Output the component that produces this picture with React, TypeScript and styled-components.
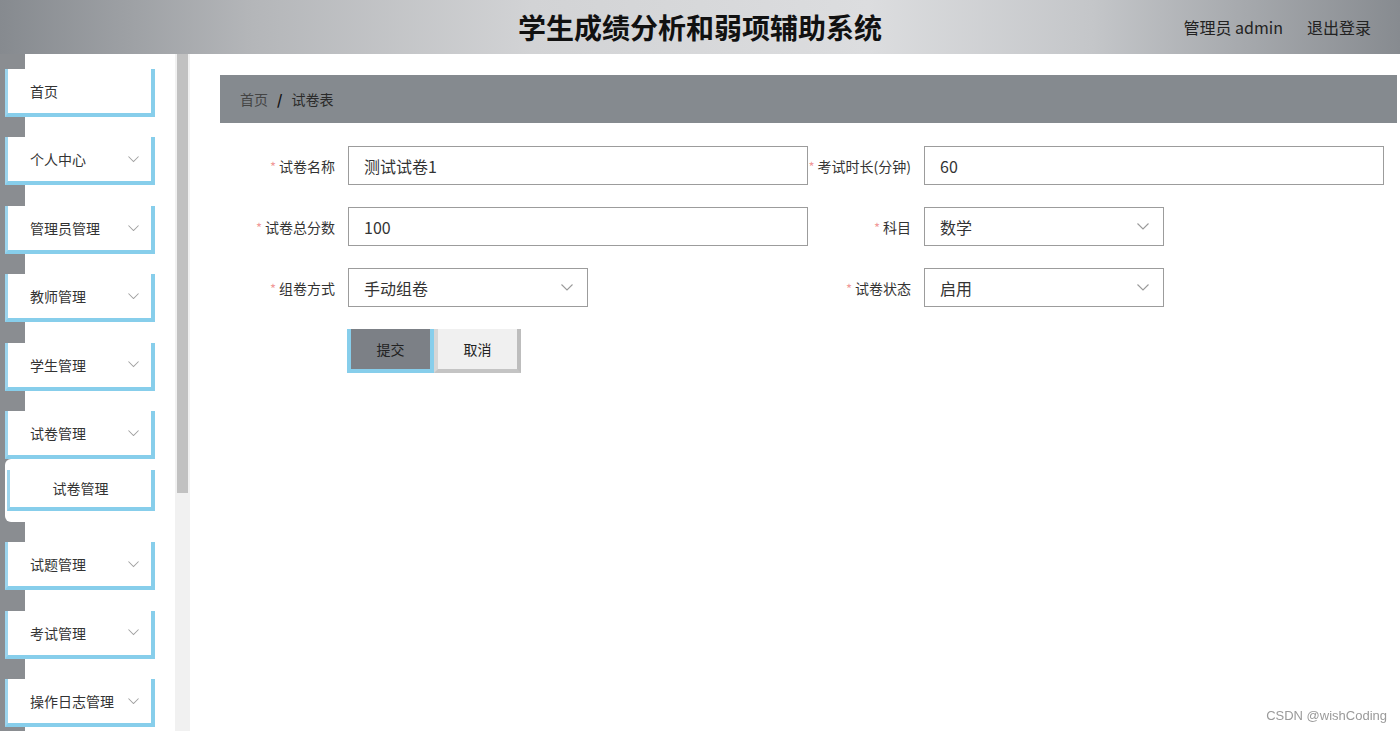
import React from "react";
import styled, { createGlobalStyle } from "styled-components";

const GlobalStyle = createGlobalStyle`
  html, body { margin: 0; padding: 0; height: 100%; overflow: hidden; }
  body { font-family: "Noto Sans CJK SC", "Noto Sans", sans-serif; color: #333; background: #fff; }
  * { box-sizing: border-box; }
`;

const Page = styled.div`
  display: flex;
  flex-direction: column;
  height: 100vh;
`;

const Header = styled.header`
  height: 54px;
  flex: none;
  display: grid;
  grid-template-columns: 1fr auto 1fr;
  align-items: center;
  background: linear-gradient(90deg, #868a8f 0%, #b4b6b9 18%, #d2d3d5 38%, #dcdddf 62%, #c4c6c9 78%, #878b90 100%);
`;

const Title = styled.h1`
  grid-column: 2;
  margin: 0;
  font-size: 28px;
  font-weight: 700;
  color: #111;
`;

const UserBar = styled.div`
  grid-column: 3;
  justify-self: end;
  display: flex;
  gap: 24px;
  padding-right: 29px;
  font-size: 16px;
  color: #222;
`;

const Body = styled.div`
  flex: 1;
  min-height: 0;
  display: flex;
`;

const Sidebar = styled.aside`
  width: 190px;
  flex: none;
  display: flex;
  min-height: 0;
`;

const SideScroll = styled.div`
  width: 175px;
  overflow: hidden;
  background: linear-gradient(90deg, #8a8d91 0, #8a8d91 25px, #fff 25px);
`;

const ScrollTrack = styled.div`
  width: 15px;
  background: #f1f1f1;
  padding: 0 2px;
`;

const ScrollThumb = styled.div`
  height: 439px;
  background: #c1c1c1;
`;

const Menu = styled.nav`
  display: flex;
  flex-direction: column;
  padding-top: 15px;
`;

const MenuItem = styled.div<{ $first?: boolean }>`
  margin: ${(p) => (p.$first ? "0" : "20.4px")} 0 0 5px;
  width: 150px;
  height: 48px;
  flex: none;
  display: flex;
  align-items: center;
  justify-content: space-between;
  padding: 0 12px 0 22px;
  background: #fff;
  border-left: 3px solid #9dd5ee;
  border-right: 4px solid #87ceeb;
  border-bottom: 4px solid #87ceeb;
  font-size: 14px;
  color: #333;
`;

const SubMenu = styled.div`
  margin-left: 5px;
  padding: 11px 0 11px 2px;
  background: #fff;
  border-radius: 6px 0 0 6px;
`;

const SubItem = styled.div`
  width: 148px;
  height: 41px;
  display: flex;
  align-items: center;
  justify-content: center;
  background: #fff;
  border-left: 3px solid #9dd5ee;
  border-right: 4px solid #87ceeb;
  border-bottom: 4px solid #87ceeb;
  font-size: 14px;
  color: #333;
`;

const Main = styled.main`
  flex: 1;
  min-width: 0;
  padding: 21px 3px 0 30px;
`;

const Breadcrumb = styled.div`
  height: 48px;
  display: flex;
  align-items: center;
  gap: 9px;
  padding-left: 20px;
  background: #858a8f;
  font-size: 14px;
  color: #2e2e2e;
`;

const Crumb = styled.span<{ $muted?: boolean }>`
  color: ${(p) => (p.$muted ? "#444" : "#2a2a2a")};
`;

const Sep = styled.span`
  font-weight: 700;
  color: #111;
`;

const Form = styled.form`
  margin-top: 23px;
  display: grid;
  grid-template-columns: 128px 460px 116px 460px;
  grid-auto-rows: 39px;
  row-gap: 22px;
  align-items: center;
`;

const Label = styled.label`
  justify-self: end;
  padding-right: 13px;
  font-size: 14px;
  color: #333;
  white-space: nowrap;
`;

const Star = styled.span`
  color: #f19a9a;
  margin-right: 3px;
  font-size: 13px;
`;

const Field = styled.div<{ $narrow?: boolean }>`
  width: ${(p) => (p.$narrow ? "240px" : "460px")};
  height: 39px;
  display: flex;
  align-items: center;
  justify-content: space-between;
  padding: 0 14px 0 15px;
  border: 1px solid #9c9c9c;
  background: #fff;
  font-size: 16px;
  color: #333;
`;

const Empty = styled.div``;

const Actions = styled.div`
  grid-column: 2;
  display: flex;
  height: 44px;
  margin-left: -1px;
  align-self: start;
`;

const Btn = styled.button<{ $primary?: boolean }>`
  width: 87px;
  height: 44px;
  padding: 0;
  font-family: inherit;
  font-size: 14px;
  color: #222;
  border: 0;
  border-left: 4px solid ${(p) => (p.$primary ? "#87ceeb" : "#d6d6d6")};
  border-right: 4px solid ${(p) => (p.$primary ? "#87ceeb" : "#bdbdbd")};
  border-bottom: 4px solid ${(p) => (p.$primary ? "#87ceeb" : "#c4c4c4")};
  background: ${(p) => (p.$primary ? "#7c8086" : "#f0f0f0")};
`;

const Watermark = styled.div`
  position: fixed;
  right: 13px;
  bottom: 8px;
  font-family: "Liberation Sans", Arial, sans-serif;
  font-size: 13px;
  color: #9a9a9a;
`;

const Chevron = ({ color = "#9a9a9a", size = 12 }: { color?: string; size?: number }) => (
  <svg width={size} height={size / 2 + 1} viewBox="0 0 12 7" fill="none">
    <path d="M0.5 0.5 L6 6 L11.5 0.5" stroke={color} strokeWidth="1.1" />
  </svg>
);

const before = ["个人中心", "管理员管理", "教师管理", "学生管理", "试卷管理"];
const after = ["试题管理", "考试管理", "操作日志管理"];

export default function App() {
  return (
    <Page>
      <GlobalStyle />
      <Header>
        <Title>学生成绩分析和弱项辅助系统</Title>
        <UserBar>
          <span>管理员 admin</span>
          <span>退出登录</span>
        </UserBar>
      </Header>
      <Body>
        <Sidebar>
          <SideScroll>
            <Menu>
              <MenuItem $first>首页</MenuItem>
              {before.map((t) => (
                <MenuItem key={t}>
                  {t}
                  <Chevron color="#a0a0a0" size={11} />
                </MenuItem>
              ))}
              <SubMenu>
                <SubItem>试卷管理</SubItem>
              </SubMenu>
              {after.map((t) => (
                <MenuItem key={t}>
                  {t}
                  <Chevron color="#a0a0a0" size={11} />
                </MenuItem>
              ))}
            </Menu>
          </SideScroll>
          <ScrollTrack>
            <ScrollThumb />
          </ScrollTrack>
        </Sidebar>
        <Main>
          <Breadcrumb>
            <Crumb $muted>首页</Crumb>
            <Sep>/</Sep>
            <Crumb>试卷表</Crumb>
          </Breadcrumb>
          <Form onSubmit={(e) => e.preventDefault()}>
            <Label><Star>*</Star>试卷名称</Label>
            <Field>测试试卷1</Field>
            <Label><Star>*</Star>考试时长(分钟)</Label>
            <Field>60</Field>

            <Label><Star>*</Star>试卷总分数</Label>
            <Field>100</Field>
            <Label><Star>*</Star>科目</Label>
            <Field $narrow>数学<Chevron /></Field>

            <Label><Star>*</Star>组卷方式</Label>
            <Field $narrow>手动组卷<Chevron /></Field>
            <Label><Star>*</Star>试卷状态</Label>
            <Field $narrow>启用<Chevron /></Field>

            <Empty />
            <Actions>
              <Btn type="submit" $primary>提交</Btn>
              <Btn type="button">取消</Btn>
            </Actions>
          </Form>
        </Main>
      </Body>
      <Watermark>CSDN @wishCoding</Watermark>
    </Page>
  );
}
